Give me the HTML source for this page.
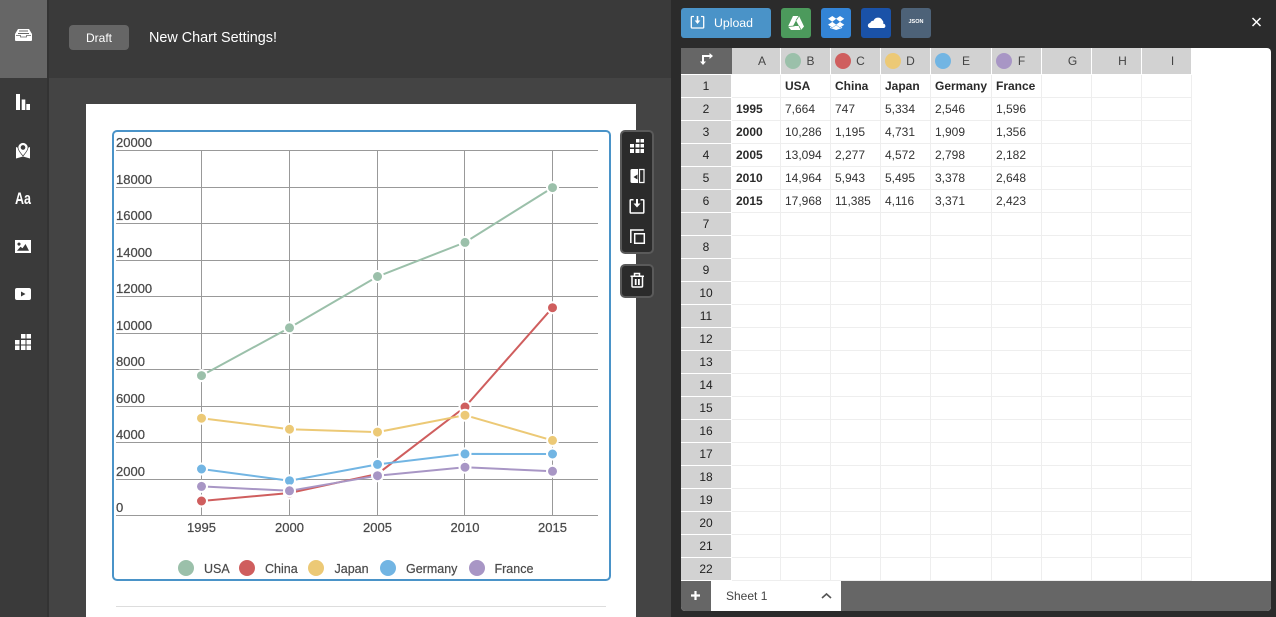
<!DOCTYPE html>
<html><head><meta charset="utf-8"><style>
html,body{margin:0;padding:0;width:1276px;height:617px;overflow:hidden;background:#2b2b2b;font-family:"Liberation Sans",sans-serif}
.a{position:absolute}
svg{position:absolute;overflow:visible}
table{position:absolute;left:681px;top:48px;border-collapse:separate;border-spacing:0;table-layout:fixed;width:511px;font-size:12px;color:#333}
td{box-sizing:border-box;height:23px;padding:0 0 0 4px;border-right:1px solid #eee;border-bottom:1px solid #eee;white-space:nowrap;overflow:hidden;line-height:22px}
tr.h td{height:27px;background:#d2d2d2;border-color:#fff;text-align:center;padding:0 0 0 12px;color:#444;position:relative}
tr.h td.d{padding-left:10px}
td.r{background:#d2d2d2;border-color:#fff;text-align:center;padding:0;color:#222}
b{font-weight:bold;color:#2a2a2a}
i{position:absolute;left:4px;top:5px;width:16px;height:16px;border-radius:50%}
</style></head><body>
<div class="a" style="left:0;top:0;width:47px;height:617px;background:#3a3a3a"></div>
<div class="a" style="left:47px;top:0;width:2px;height:617px;background:#333"></div>
<div class="a" style="left:0;top:0;width:47px;height:78px;background:#666"></div>
<div class="a" style="left:49px;top:0;width:622px;height:78px;background:#3a3a3a"></div>
<div class="a" style="left:49px;top:78px;width:622px;height:539px;background:#444"></div>
<div class="a" style="left:69px;top:25px;width:60px;height:25px;background:#666;border-radius:4px;color:#fff;font-size:12px;line-height:26px;text-align:center">Draft</div>
<div class="a" style="left:149px;top:29px;color:#fff;font-size:14.400px;line-height:18px;white-space:nowrap">New Chart Settings!</div>

<svg style="left:0;top:0" width="47" height="360" fill="#fff">
<path d="M18 29h11l3 5v6q0 1-1 1H16q-1 0-1-1v-6z"/>
<path d="M19 31h9M18 33.500h11" stroke="#666" stroke-width="1" fill="none"/>
<path d="M16 35.500h4.500v1.500h6v-1.500h4.500" stroke="#666" stroke-width=".8" fill="none"/>
<path d="M16 94h4v16h-4zM21.700 99.500h3.600V110h-3.600zM26.300 104H30v6h-3.700z"/>
<path d="M16 147l4 1.500 3 6 3-6 4-1.500v11.500l-7-2-7 2z"/>
<path d="M23 142.500a5 5 0 0 1 5 5c0 3-3 6-5 8.500-2-2.500-5-5.500-5-8.500a5 5 0 0 1 5-5zM23 145.500a2 2 0 1 0 .01 0z" fill-rule="evenodd" stroke="#3a3a3a" stroke-width=".7"/>
<text x="15" y="204" font-family="'Liberation Sans',sans-serif" font-size="16.500" font-weight="bold" textLength="16" lengthAdjust="spacingAndGlyphs">Aa</text>
<path d="M15 240h16v13H15zM19 242.500a1.600 1.600 0 1 0 .01 0zM17 250.800l3.500-4 2 1.500 3-4.300 3.500 6.800z" fill-rule="evenodd"/>
<path d="M17 288h12q2 0 2 2v8q0 2-2 2H17q-2 0-2-2v-8q0-2 2-2zM21 291.500v5l4.500-2.500z" fill-rule="evenodd"/>
<path d="M21 334h4.500v4.500H21zM26.500 334H31v4.500h-4.500zM15 340h4.500v4.500H15zM21 340h4.500v4.500H21zM26.500 340H31v4.500h-4.500zM15 345.500h4.500V350H15zM21 345.500h4.500V350H21zM26.500 345.500H31V350h-4.500z"/>
</svg>

<div class="a" style="left:86px;top:104px;width:550px;height:513px;background:#fff"></div>
<div class="a" style="left:112px;top:130px;width:495px;height:447px;border:2px solid #4a93c8;border-radius:5px"></div>
<div class="a" style="left:116px;top:606px;width:490px;height:1px;background:#ddd"></div>

<svg style="left:0;top:0" width="671" height="617" font-family="'Liberation Sans',sans-serif" font-size="13" fill="#4a4a4a">
<g stroke="#999" stroke-width="1">
<path d="M116 150.500H598M116 187.500H598M116 223.500H598M116 260.500H598M116 296.500H598M116 333.500H598M116 369.500H598M116 406.500H598M116 442.500H598M116 479.500H598M116 515.500H598"/>
<path d="M201.500 150V515M289.500 150V515M377.500 150V515M464.500 150V515M552.500 150V515"/>
</g>
<g stroke="#4a4a4a" stroke-width=".25">
<text x="116" y="147">20000</text><text x="116" y="184">18000</text><text x="116" y="220">16000</text><text x="116" y="257">14000</text><text x="116" y="293">12000</text><text x="116" y="330">10000</text><text x="116" y="366">8000</text><text x="116" y="403">6000</text><text x="116" y="439">4000</text><text x="116" y="476">2000</text><text x="116" y="512">0</text>
<text x="201.500" y="532" text-anchor="middle">1995</text><text x="289.500" y="532" text-anchor="middle">2000</text><text x="377.500" y="532" text-anchor="middle">2005</text><text x="465" y="532" text-anchor="middle">2010</text><text x="552.500" y="532" text-anchor="middle">2015</text>
</g>
<g fill="none" stroke-width="2">
<polyline stroke="#9bc0aa" points="201.500,375.600 289.500,327.800 377.500,276.500 465,242.400 552.500,187.600"/>
<polyline stroke="#cf5e5e" points="201.500,501 289.500,493 377.500,474 465,407 552.500,307.700"/>
<polyline stroke="#ecc976" points="201.500,418.200 289.500,429.200 377.500,432.100 465,415.200 552.500,440.400"/>
<polyline stroke="#72b5e3" points="201.500,469 289.500,480.700 377.500,464.400 465,453.900 552.500,454"/>
<polyline stroke="#a896c5" points="201.500,486.400 289.500,490.800 377.500,475.700 465,467.200 552.500,471.300"/>
</g>
<g stroke="#fff" stroke-width="2">
<g fill="#9bc0aa"><circle cx="201.500" cy="375.600" r="5.500"/><circle cx="289.500" cy="327.800" r="5.500"/><circle cx="377.500" cy="276.500" r="5.500"/><circle cx="465" cy="242.400" r="5.500"/><circle cx="552.500" cy="187.600" r="5.500"/></g>
<g fill="#cf5e5e"><circle cx="201.500" cy="501" r="5.500"/><circle cx="289.500" cy="493" r="5.500"/><circle cx="377.500" cy="474" r="5.500"/><circle cx="465" cy="407" r="5.500"/><circle cx="552.500" cy="307.700" r="5.500"/></g>
<g fill="#ecc976"><circle cx="201.500" cy="418.200" r="5.500"/><circle cx="289.500" cy="429.200" r="5.500"/><circle cx="377.500" cy="432.100" r="5.500"/><circle cx="465" cy="415.200" r="5.500"/><circle cx="552.500" cy="440.400" r="5.500"/></g>
<g fill="#72b5e3"><circle cx="201.500" cy="469" r="5.500"/><circle cx="289.500" cy="480.700" r="5.500"/><circle cx="377.500" cy="464.400" r="5.500"/><circle cx="465" cy="453.900" r="5.500"/><circle cx="552.500" cy="454" r="5.500"/></g>
<g fill="#a896c5"><circle cx="201.500" cy="486.400" r="5.500"/><circle cx="289.500" cy="490.800" r="5.500"/><circle cx="377.500" cy="475.700" r="5.500"/><circle cx="465" cy="467.200" r="5.500"/><circle cx="552.500" cy="471.300" r="5.500"/></g>
</g>
<circle cx="186" cy="568" r="8" fill="#9bc0aa"/><circle cx="247" cy="568" r="8" fill="#cf5e5e"/><circle cx="316" cy="568" r="8" fill="#ecc976"/><circle cx="388" cy="568" r="8" fill="#72b5e3"/><circle cx="477" cy="568" r="8" fill="#a896c5"/>
<g font-size="12.500" stroke="#4a4a4a" stroke-width=".2"><text x="204" y="573">USA</text><text x="265" y="573">China</text><text x="334.500" y="573">Japan</text><text x="406" y="573">Germany</text><text x="494.500" y="573">France</text></g>
</svg>

<div class="a" style="left:620px;top:130px;width:30px;height:120px;background:#2b2b2b;border:2px solid #5a5a5a;border-radius:5px"></div>
<div class="a" style="left:620px;top:264px;width:30px;height:30px;background:#2b2b2b;border:2px solid #5a5a5a;border-radius:5px"></div>
<svg style="left:0;top:0" width="671" height="300" fill="#fff">
<path d="M636 139h3.500v3.500H636zM640.500 139h3.500v3.500h-3.500zM630 144h4v3.500h-4zM635.500 144h4v3.500h-4zM640.500 144h3.500v3.500h-3.500zM630 149h4v4h-4zM635.500 149h4v4h-4zM640.500 149h3.500v4h-3.500z"/>
<path d="M632 169h6v14h-6q-1.500 0-1.500-1.500v-11q0-1.500 1.500-1.500z"/><path d="M637.500 174.500l-4 2.500 4 2.500z" fill="#2b2b2b"/>
<path d="M639.500 169.500h4.500v13h-4.500z" fill="none" stroke="#fff" stroke-width="1.200"/>
<path d="M633.500 199.800h-2.500a.8 .8 0 0 0-.8 .8v11.600a.8 .8 0 0 0 .8 .8h12a.8 .8 0 0 0 .8-.8v-11.600a.8 .8 0 0 0-.8-.8h-2.500" fill="none" stroke="#fff" stroke-width="1.500"/>
<path d="M636 199h2v4.500h2.500l-3.500 4-3.500-4h2.500z"/>
<path d="M630.800 243v-13h13" fill="none" stroke="#fff" stroke-width="1.500"/>
<path d="M634.700 233.700h9.600v9.600h-9.600z" fill="none" stroke="#fff" stroke-width="1.500"/>
<path d="M630.500 276.300h13.500M634.500 276v-2.500h5v2.500M632 277v9a1 1 0 0 0 1 1h8.500a1 1 0 0 0 1-1v-9" fill="none" stroke="#fff" stroke-width="1.500"/>
<path d="M634.800 279h1.800v6h-1.800zM638 279h1.800v6H638z"/>
</svg>

<div class="a" style="left:671px;top:0;width:605px;height:617px;background:#2b2b2b"></div>
<div class="a" style="left:681px;top:8px;width:90px;height:30px;background:#4a93c8;border-radius:3px;color:#fff;font-size:12.300px;line-height:30px;text-indent:33px">Upload</div>
<div class="a" style="left:781px;top:8px;width:30px;height:30px;background:#4c9a5c;border-radius:3px"></div>
<div class="a" style="left:821px;top:8px;width:30px;height:30px;background:#3384d6;border-radius:3px"></div>
<div class="a" style="left:861px;top:8px;width:30px;height:30px;background:#1a52a8;border-radius:3px"></div>
<div class="a" style="left:901px;top:8px;width:30px;height:30px;background:#4d6278;border-radius:3px;color:#fff;font-size:5.500px;font-weight:bold;line-height:29px;text-align:center">JSON</div>
<svg style="left:0;top:0" width="1276" height="50" fill="#fff">
<path d="M694 16.500h-2a.7 .7 0 0 0-.7 .7v10.100a.7 .7 0 0 0 .7 .7h11a.7 .7 0 0 0 .7-.7V17.200a.7 .7 0 0 0-.7-.7h-2" fill="none" stroke="#fff" stroke-width="1.300"/>
<path d="M696.700 16h1.600v4.500h2l-2.800 3.500-2.800-3.500h2z"/>
<path d="M793 16h6l5 10.500-3 3.500h-10l-3-3.500zM796 20.500l-3 5.500h6z" fill-rule="evenodd"/>
<path d="M788 26.500l6.500-.5M796 20.500l3-4.500M799 26l2 4" stroke="#4c9a5c" stroke-width=".8" fill="none"/>
<path d="M832.300 16l4 2.800-4 2.900-4.300-2.900zM840 16l4.300 2.800-4.300 2.900-4-2.900zM832.300 21.900l4 2.800-4 2.800-4.300-2.800zM840 21.900l4.300 2.800-4.300 2.800-4-2.800zM836.200 25.200l3.900 2.800 2-1.300v1.300l-6 2-6-2v-1.300l2 1.300z"/>
<path d="M870.500 28a2.500 2.500 0 0 1-.3-5 3.400 3.400 0 0 1 3.300-2.200 4.800 4.800 0 0 1 8.800-.5 3 3 0 0 1 .8 3.300 2.300 2.300 0 0 1 .9 4.400z"/>
<path d="M1252.500 18l8 8M1260.500 18l-8 8" fill="none" stroke="#fff" stroke-width="1.500"/>
</svg>

<div class="a" style="left:681px;top:48px;width:590px;height:563px;background:#fff;border-radius:0 4px 4px 4px"></div>
<table>
<colgroup><col style="width:51px"><col style="width:49px"><col style="width:50px"><col style="width:50px"><col style="width:50px"><col style="width:61px"><col style="width:50px"><col style="width:50px"><col style="width:50px"><col style="width:50px"></colgroup>
<tr class="h"><td style="background:#666;padding:0;border-right:0"></td><td>A</td><td class="d"><i style="background:#9bc0aa"></i>B</td><td class="d"><i style="background:#cf5e5e"></i>C</td><td class="d"><i style="background:#ecc976"></i>D</td><td class="d"><i style="background:#72b5e3"></i>E</td><td class="d"><i style="background:#a896c5"></i>F</td><td>G</td><td>H</td><td>I</td></tr>
<tr><td class="r">1</td><td></td><td><b>USA</b></td><td><b>China</b></td><td><b>Japan</b></td><td><b>Germany</b></td><td><b>France</b></td><td></td><td></td><td></td></tr>
<tr><td class="r">2</td><td><b>1995</b></td><td>7,664</td><td>747</td><td>5,334</td><td>2,546</td><td>1,596</td><td></td><td></td><td></td></tr>
<tr><td class="r">3</td><td><b>2000</b></td><td>10,286</td><td>1,195</td><td>4,731</td><td>1,909</td><td>1,356</td><td></td><td></td><td></td></tr>
<tr><td class="r">4</td><td><b>2005</b></td><td>13,094</td><td>2,277</td><td>4,572</td><td>2,798</td><td>2,182</td><td></td><td></td><td></td></tr>
<tr><td class="r">5</td><td><b>2010</b></td><td>14,964</td><td>5,943</td><td>5,495</td><td>3,378</td><td>2,648</td><td></td><td></td><td></td></tr>
<tr><td class="r">6</td><td><b>2015</b></td><td>17,968</td><td>11,385</td><td>4,116</td><td>3,371</td><td>2,423</td><td></td><td></td><td></td></tr>
<tr><td class="r">7</td><td></td><td></td><td></td><td></td><td></td><td></td><td></td><td></td><td></td></tr>
<tr><td class="r">8</td><td></td><td></td><td></td><td></td><td></td><td></td><td></td><td></td><td></td></tr>
<tr><td class="r">9</td><td></td><td></td><td></td><td></td><td></td><td></td><td></td><td></td><td></td></tr>
<tr><td class="r">10</td><td></td><td></td><td></td><td></td><td></td><td></td><td></td><td></td><td></td></tr>
<tr><td class="r">11</td><td></td><td></td><td></td><td></td><td></td><td></td><td></td><td></td><td></td></tr>
<tr><td class="r">12</td><td></td><td></td><td></td><td></td><td></td><td></td><td></td><td></td><td></td></tr>
<tr><td class="r">13</td><td></td><td></td><td></td><td></td><td></td><td></td><td></td><td></td><td></td></tr>
<tr><td class="r">14</td><td></td><td></td><td></td><td></td><td></td><td></td><td></td><td></td><td></td></tr>
<tr><td class="r">15</td><td></td><td></td><td></td><td></td><td></td><td></td><td></td><td></td><td></td></tr>
<tr><td class="r">16</td><td></td><td></td><td></td><td></td><td></td><td></td><td></td><td></td><td></td></tr>
<tr><td class="r">17</td><td></td><td></td><td></td><td></td><td></td><td></td><td></td><td></td><td></td></tr>
<tr><td class="r">18</td><td></td><td></td><td></td><td></td><td></td><td></td><td></td><td></td><td></td></tr>
<tr><td class="r">19</td><td></td><td></td><td></td><td></td><td></td><td></td><td></td><td></td><td></td></tr>
<tr><td class="r">20</td><td></td><td></td><td></td><td></td><td></td><td></td><td></td><td></td><td></td></tr>
<tr><td class="r">21</td><td></td><td></td><td></td><td></td><td></td><td></td><td></td><td></td><td></td></tr>
<tr><td class="r">22</td><td></td><td></td><td></td><td></td><td></td><td></td><td></td><td></td><td></td></tr>
</table>
<svg style="left:0;top:0" width="1276" height="80" fill="#fff">
<path d="M703 62V56h7" fill="none" stroke="#fff" stroke-width="2"/>
<path d="M709.500 53l3.500 3-3.500 3zM700 61.500l3 3.500 3-3.500z"/>
</svg>
<div class="a" style="left:681px;top:581px;width:590px;height:30px;background:#666;border-radius:0 0 4px 4px"></div>
<div class="a" style="left:711px;top:581px;width:130px;height:30px;background:#fff;color:#444;font-size:12px;line-height:30px;text-indent:15px">Sheet 1</div>
<svg style="left:0;top:570px" width="1276" height="47">
<path d="M695.500 21v9M691 25.500h9" stroke="#fff" stroke-width="2.200" fill="none"/>
<path d="M822 28l4.500-4 4.500 4" stroke="#555" stroke-width="1.600" fill="none"/>
</svg>
</body></html>
